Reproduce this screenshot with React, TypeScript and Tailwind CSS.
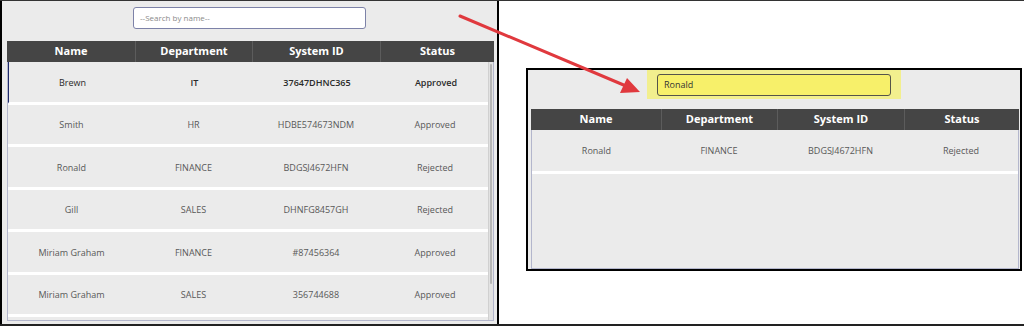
import React from "react"

type Row = {
  name: string
  dept: string
  id: string
  status: string
}

const rows: Row[] = [
  { name: "Brewn", dept: "IT", id: "37647DHNC365", status: "Approved" },
  { name: "Smith", dept: "HR", id: "HDBE574673NDM", status: "Approved" },
  { name: "Ronald", dept: "FINANCE", id: "BDGSJ4672HFN", status: "Rejected" },
  { name: "Gill", dept: "SALES", id: "DHNFG8457GH", status: "Rejected" },
  { name: "Miriam Graham", dept: "FINANCE", id: "#87456364", status: "Approved" },
  { name: "Miriam Graham", dept: "SALES", id: "356744688", status: "Approved" },
]

const font = { fontFamily: "'Open Sans', 'Liberation Sans', sans-serif" }

function Header({ cols }: { cols: string }) {
  const labels = ["Name", "Department", "System ID", "Status"]
  return (
    <div className={`grid ${cols} h-[21px] bg-[#454545] text-white text-[11px] font-bold`}>
      {labels.map((label, i) => (
        <div
          key={label}
          className={`flex items-center justify-center ${i > 0 ? "border-l border-[#5c5c5c]" : ""}`}
        >
          {label}
        </div>
      ))}
    </div>
  )
}

export default function App() {
  return (
    <div
      className="relative w-[1024px] h-[327px] bg-white border-t border-[#333] overflow-hidden"
      style={font}
    >
      <div className="flex items-start h-[325px] border-b-2 border-[#222]">
        {/* Before: full gallery */}
        <div className="w-[499px] h-full border-x-2 border-black bg-[#ebebeb] flex flex-col px-[5px] pt-[6px]">
          <div className="mx-auto w-[233px] h-[22px] bg-white border border-[#7d82a8] rounded-[3px] flex items-center px-[6px] text-[8px] text-[#8a8a8a]">
            --Search by name--
          </div>
          <div className="mt-[12px] w-[487px]">
            <Header cols="grid-cols-[128px_117px_128px_114px]" />
            <div className="relative h-[259px] border-x border-b border-[#b3b6cc] overflow-hidden">
              {rows.map((row, i) => (
                <div
                  key={i}
                  className={`grid grid-cols-[127px_117px_128px_110px] h-[42.5px] border-b-[3px] border-white text-[9px] ${
                    i === 0
                      ? "border-l-2 border-l-[#1f2a6b] text-[#2a2a2a] font-semibold -ml-px"
                      : "text-[#585858]"
                  }`}
                >
                  <div className={`flex items-center justify-center pt-px ${i === 0 ? "font-normal" : ""}`}>
                    {row.name}
                  </div>
                  <div className="flex items-center justify-center pt-px">{row.dept}</div>
                  <div className="flex items-center justify-center pt-px">{row.id}</div>
                  <div className="flex items-center justify-center pt-px">{row.status}</div>
                </div>
              ))}
              {/* scrollbar */}
              <div className="absolute right-0 top-0 bottom-0 w-[5px] bg-[#e2e2e2] border-l border-[#d0d0d0]">
                <div className="mt-[2px] h-[220px] mx-[1px] bg-[#b5b5b5] rounded-sm" />
              </div>
            </div>
          </div>
        </div>

        {/* After: filtered gallery */}
        <div className="ml-[27px] mt-[67px] w-[496px] h-[203px] border-2 border-black bg-[#ebebeb] flex flex-col px-[3px]">
          <div className="mx-auto w-[254px] h-[29px] bg-[#f2ef8e] flex items-center justify-center">
            <div className="w-[234px] h-[22px] bg-[#f7f06a] border border-[#55544a] rounded-[3px] flex items-center px-[6px] text-[9px] text-[#333]">
              Ronald
            </div>
          </div>
          <div className="mt-[10px] w-[488px]">
            <Header cols="grid-cols-[130px_116px_127px_115px]" />
            <div className="h-[139px] border-x border-b border-[#b3b6cc]">
              <div className="grid grid-cols-[129px_116px_127px_114px] h-[44px] border-b-[3px] border-white text-[9px] text-[#585858]">
                <div className="flex items-center justify-center">Ronald</div>
                <div className="flex items-center justify-center">FINANCE</div>
                <div className="flex items-center justify-center">BDGSJ4672HFN</div>
                <div className="flex items-center justify-center">Rejected</div>
              </div>
            </div>
          </div>
        </div>
      </div>

      {/* Arrow */}
      <svg className="absolute left-0 top-0 pointer-events-none" width="1024" height="327">
        <line x1="460" y1="15" x2="626" y2="85" stroke="#e0393e" strokeWidth="3" strokeLinecap="round" />
        <polygon points="640,91 620,92 627,77" fill="#e0393e" />
      </svg>
    </div>
  )
}
